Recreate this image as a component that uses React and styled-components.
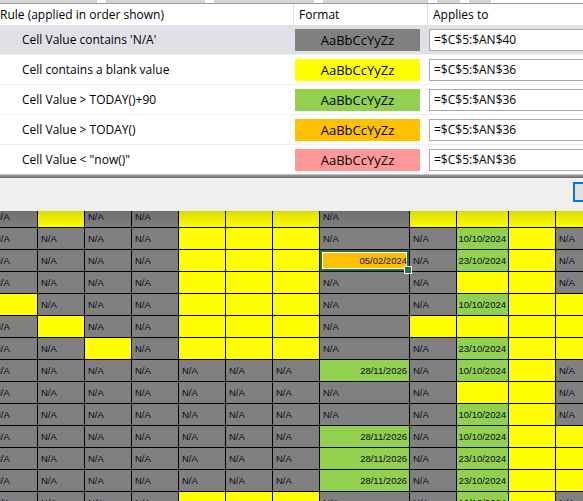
import React from "react";
import styled, { createGlobalStyle, css } from "styled-components";

const GlobalStyle = createGlobalStyle`
  html, body {
    margin: 0;
    padding: 0;
    background: #ffffff;
    overflow: hidden;
  }
  * {
    box-sizing: border-box;
  }
`;

const Page = styled.div`
  width: 583px;
  height: 501px;
  display: flex;
  flex-direction: column;
  overflow: hidden;
  font-family: "Segoe UI", "Open Sans", "Noto Sans", sans-serif;
`;

const Dialog = styled.div`
  background: #ffffff;
  display: flex;
  flex-direction: column;
`;

const TabStrip = styled.div`
  display: flex;
  gap: 9px;
  height: 4px;
  border-bottom: 1px solid #9c9c9c;
`;

const TabSeg = styled.div`
  width: ${(p) => p.w}px;
  height: 3px;
  background: #d4d4d4;
`;

const Columns = css`
  display: grid;
  grid-template-columns: 294px 134px 1fr;
`;

const HeaderRow = styled.div`
  ${Columns};
  height: 21px;
  font-size: 12px;
  color: #000;
`;

const HeaderCell = styled.div`
  display: flex;
  align-items: center;
  padding-left: ${(p) => p.pad || 0}px;
  border-right: ${(p) => (p.divider ? "1px solid #e3e3e3" : "none")};
`;

const RuleRow = styled.div`
  ${Columns};
  height: 30px;
  align-items: center;
  background: ${(p) => (p.selected ? "#e0e0e6" : "#ffffff")};
  border-bottom: 1px solid ${(p) => (p.last ? "#c4c4c4" : "#efefef")};
  font-size: 12px;
  color: #000;
`;

const RuleText = styled.div`
  padding-left: 22px;
  white-space: nowrap;
`;

const SwatchCell = styled.div`
  padding-left: 1px;
`;

const Swatch = styled.div`
  width: 125px;
  height: 22px;
  background: ${(p) => p.bg};
  display: flex;
  align-items: center;
  justify-content: center;
  font-size: 13px;
  color: #000;
`;

const RangeInput = styled.div`
  height: 22px;
  margin-left: 1px;
  margin-right: -4px;
  border: 1px solid #a9a9a9;
  background: #ffffff;
  display: flex;
  align-items: center;
  padding-left: 4px;
  font-size: 12px;
  color: #000;
`;

const DialogEdge = styled.div`
  height: 3px;
  background: linear-gradient(#9a9a9a, #6c6c6c);
`;

const ButtonBar = styled.div`
  height: 33px;
  background: #f0f0f0;
  display: flex;
  justify-content: flex-end;
  padding-top: 4px;
`;

const OkButton = styled.div`
  width: 75px;
  height: 20px;
  margin-right: -65px;
  border: 2px solid #0078d7;
  background: #e1e1e1;
`;

const SheetViewport = styled.div`
  flex: 1;
  overflow: hidden;
  position: relative;

  &::after {
    content: "";
    position: absolute;
    left: 0;
    right: 0;
    top: 0;
    height: 17px;
    background: linear-gradient(rgba(0, 0, 0, 0.14), rgba(0, 0, 0, 0));
    pointer-events: none;
  }
`;

const Sheet = styled.div`
  display: grid;
  grid-template-columns: repeat(7, 47px) 90px 47px 52px 47px 47px;
  grid-auto-rows: 22px;
  margin: -5px 0 0 -9px;
  font-family: "Liberation Sans", Arial, sans-serif;
  font-size: 9.5px;
  color: #0a0a1c;
`;

const fills = {
  N: "#808080",
  Y: "#ffff00",
  G: "#92d050",
  O: "#ffc000",
};

const Cell = styled.div`
  position: relative;
  background: ${(p) => fills[p.kind]};
  border-right: 1px solid #000;
  border-bottom: 1px solid #000;
  display: flex;
  align-items: center;
  justify-content: ${(p) => (p.date ? "flex-end" : "flex-start")};
  padding: 0 2px 0 3px;
  white-space: nowrap;
  overflow: hidden;

  ${(p) =>
    p.selected &&
    css`
      overflow: visible;
      box-shadow: inset 0 0 0 2px #217346, inset 0 0 0 3px #ffffff;
      &::after {
        content: "";
        position: absolute;
        right: -3px;
        bottom: -3px;
        width: 6px;
        height: 6px;
        background: #217346;
        border: 1px solid #ffffff;
        z-index: 2;
      }
    `}
`;

const rules = [
  { text: "Cell Value contains 'N/A'", bg: "#808080", range: "=$C$5:$AN$40" },
  { text: "Cell contains a blank value", bg: "#ffff00", range: "=$C$5:$AN$36" },
  { text: "Cell Value > TODAY()+90", bg: "#92d050", range: "=$C$5:$AN$36" },
  { text: "Cell Value > TODAY()", bg: "#ffc000", range: "=$C$5:$AN$36" },
  { text: 'Cell Value < "now()"', bg: "#ff9999", range: "=$C$5:$AN$36" },
];

const tabs = [97, 99, 100, 105, 23, 22];

// N = N/A, Y = blank, G:/O: = dated cells, * = active cell
const rows = [
  "N Y N N Y Y Y N Y Y Y Y",
  "N N N N Y Y Y N N G:10/10/2024 Y N",
  "N N N N Y Y Y O:05/02/2024* N G:23/10/2024 Y N",
  "N N N N Y Y Y N N Y Y N",
  "Y N N N Y Y Y N N G:10/10/2024 Y Y",
  "N Y N N Y Y Y N Y Y Y Y",
  "N N Y N Y Y Y N N G:23/10/2024 Y Y",
  "N N N N N N N G:28/11/2026 N G:10/10/2024 Y N",
  "N N N N N N N N N Y Y N",
  "N N N N N N N N N G:10/10/2024 Y N",
  "N N N N N N N G:28/11/2026 N G:10/10/2024 Y Y",
  "N N N N N N N G:28/11/2026 N G:23/10/2024 Y Y",
  "N N N N N N N G:28/11/2026 N G:23/10/2024 Y Y",
  "N N N N Y Y Y N N G:10/10/2024 Y N",
];

const parseCell = (code) => {
  const selected = code.endsWith("*");
  const clean = selected ? code.slice(0, -1) : code;
  const [kind, date] = clean.split(":");
  return { kind, date, selected };
};

const App = () => {
  return (
    <Page>
      <GlobalStyle />
      <Dialog>
        <TabStrip>
          {tabs.map((w, i) => (
            <TabSeg key={i} w={w} />
          ))}
        </TabStrip>
        <HeaderRow>
          <HeaderCell divider>Rule (applied in order shown)</HeaderCell>
          <HeaderCell divider pad={5}>
            Format
          </HeaderCell>
          <HeaderCell pad={5}>Applies to</HeaderCell>
        </HeaderRow>
        {rules.map((r, i) => (
          <RuleRow key={i} selected={i === 0} last={i === rules.length - 1}>
            <RuleText>{r.text}</RuleText>
            <SwatchCell>
              <Swatch bg={r.bg}>AaBbCcYyZz</Swatch>
            </SwatchCell>
            <RangeInput>{r.range}</RangeInput>
          </RuleRow>
        ))}
        <DialogEdge />
      </Dialog>
      <ButtonBar>
        <OkButton />
      </ButtonBar>
      <SheetViewport>
        <Sheet>
          {rows.map((row, r) =>
            row.split(" ").map((code, c) => {
              const cell = parseCell(code);
              return (
                <Cell
                  key={`${r}-${c}`}
                  kind={cell.kind}
                  date={cell.date}
                  selected={cell.selected}
                >
                  {cell.kind === "N" ? "N/A" : cell.date || ""}
                </Cell>
              );
            })
          )}
        </Sheet>
      </SheetViewport>
    </Page>
  );
};

export default App;
